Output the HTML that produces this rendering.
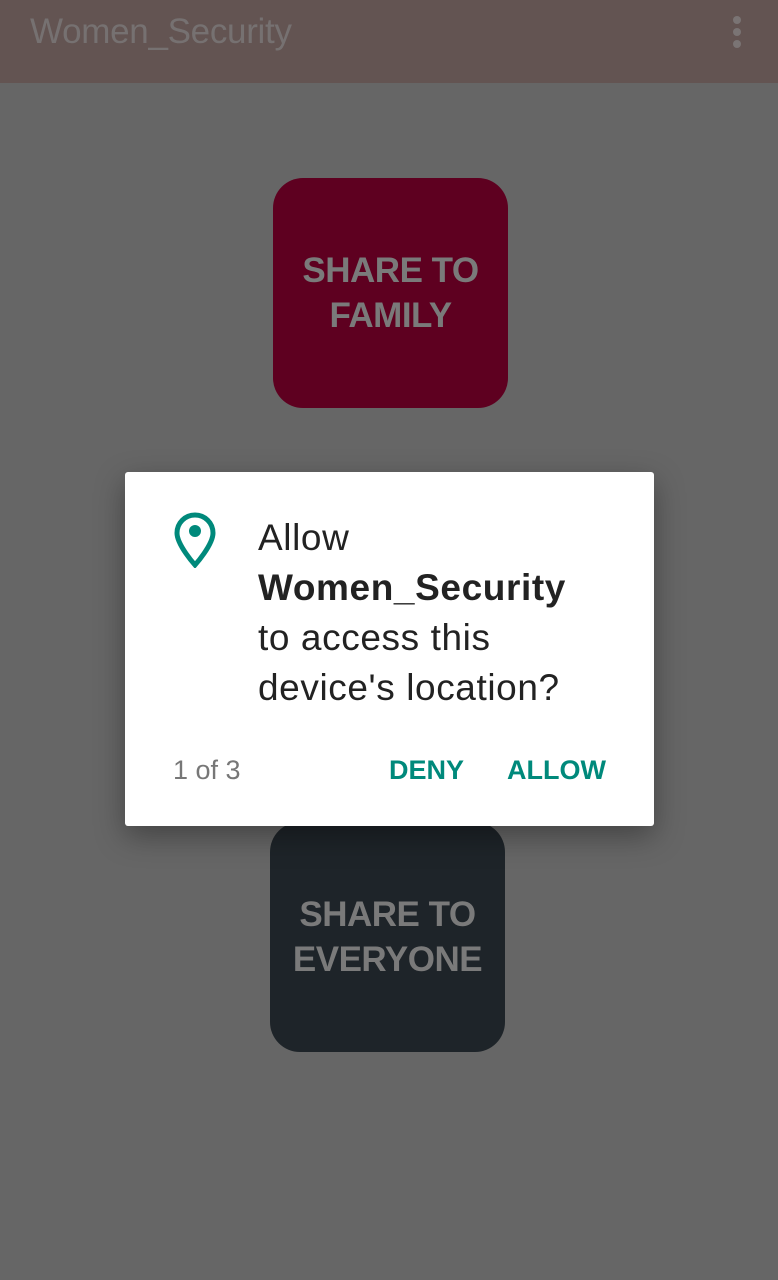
<!DOCTYPE html>
<html><head><style>
body{margin:0;width:778px;height:1280px;background:#666666;position:relative;overflow:hidden;font-family:"Liberation Sans",sans-serif}
.bar{position:absolute;left:0;top:0;width:778px;height:83px;background:#635452}
.title{position:absolute;left:30px;top:12px;font-size:35px;color:#767171;letter-spacing:-0.3px}
.dots{position:absolute;left:733px;top:16px}
.dots i{display:block;width:8px;height:8px;border-radius:50%;background:#7a7474;margin-bottom:4px}
.btn{position:absolute;width:235px;height:230px;border-radius:30px;display:flex;align-items:center;justify-content:center;text-align:center;font-weight:bold;font-size:35px;line-height:45px;color:#7a7a7a;letter-spacing:-0.5px}
.dlg{position:absolute;left:125px;top:472px;width:529px;height:354px;background:#fff;border-radius:3px;box-shadow:0 10px 30px rgba(0,0,0,.35)}
.txt{position:absolute;left:133px;top:41px;font-size:37px;line-height:50px;color:#222;letter-spacing:0.6px}
.cnt{position:absolute;left:48px;top:283px;font-size:27px;color:#777}
.b{position:absolute;top:283px;font-size:27px;font-weight:bold;color:#00897b}
</style></head><body>
<div class="bar"><div class="title">Women_Security</div><div class="dots"><i></i><i></i><i></i></div></div>
<div class="btn" style="left:273px;top:178px;background:#5e0020">SHARE TO<br>FAMILY</div>
<div class="btn" style="left:270px;top:822px;background:#1e2429">SHARE TO<br>EVERYONE</div>
<div class="dlg">
<svg style="position:absolute;left:48px;top:40px" width="44" height="56" viewBox="0 0 44 56"><path d="M22 3C12 3 4 11 4 21c0 12 18 32 18 32s18-20 18-32C40 11 32 3 22 3z" fill="none" stroke="#00897b" stroke-width="5"/><circle cx="22" cy="19" r="6" fill="#00897b"/></svg>
<div class="txt">Allow<br><b>Women_Security</b><br>to access this<br>device's location?</div>
<div class="cnt">1 of 3</div>
<div class="b" style="left:264px">DENY</div>
<div class="b" style="left:382px">ALLOW</div>
</div>
</body></html>
